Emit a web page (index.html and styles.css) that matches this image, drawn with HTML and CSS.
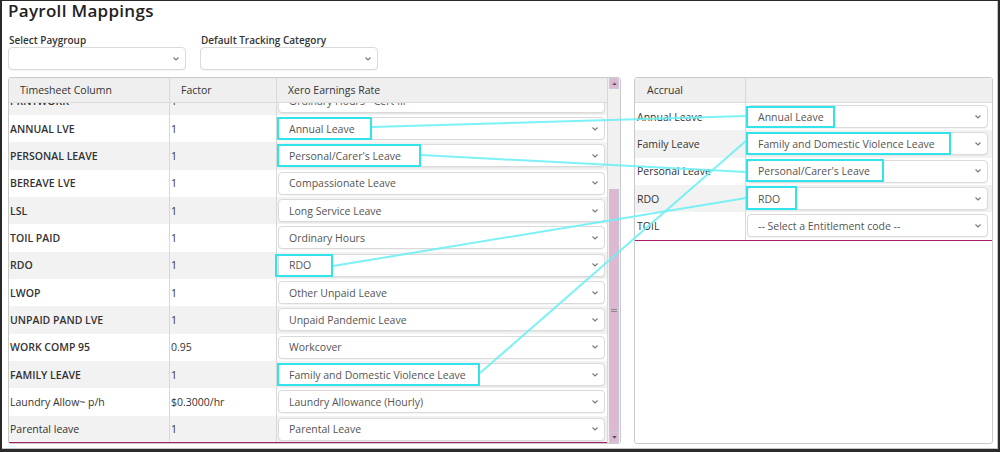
FILE: index.html
```html
<!DOCTYPE html>
<html lang="en">
<head>
<meta charset="utf-8">
<title>Payroll Mappings</title>
<link rel="stylesheet" href="styles.css">
</head>
<body>
<div class="page">
  <h1 class="title">Payroll Mappings</h1>

  <div class="filters">
    <div class="field">
      <label class="field-label">Select Paygroup</label>
      <div class="sel sel-top"><span class="sel-text"></span><svg class="chev" viewBox="0 0 6 4"><path d="M0.5 0.5 L3 3 L5.5 0.5"/></svg></div>
    </div>
    <div class="field">
      <label class="field-label">Default Tracking Category</label>
      <div class="sel sel-top"><span class="sel-text"></span><svg class="chev" viewBox="0 0 6 4"><path d="M0.5 0.5 L3 3 L5.5 0.5"/></svg></div>
    </div>
  </div>

  <div class="panels">
    <div class="panel panel-left">
      <div class="grid">
        <div class="thead">
          <div class="th c1">Timesheet Column</div>
          <div class="th c2">Factor</div>
          <div class="th c3">Xero Earnings Rate</div>
        </div>
        <div class="tbody">
          <div class="rows scrolled">
            <div class="row"><div class="td c1 up">PRNTWORK</div><div class="td c2">1</div><div class="td c3"><div class="sel"><span class="sel-text">Ordinary Hours - Cert III</span><svg class="chev" viewBox="0 0 6 4"><path d="M0.5 0.5 L3 3 L5.5 0.5"/></svg></div></div></div>
            <div class="row"><div class="td c1 up">ANNUAL LVE</div><div class="td c2">1</div><div class="td c3"><div class="sel"><span class="sel-text">Annual Leave</span><svg class="chev" viewBox="0 0 6 4"><path d="M0.5 0.5 L3 3 L5.5 0.5"/></svg></div></div></div>
            <div class="row"><div class="td c1 up">PERSONAL LEAVE</div><div class="td c2">1</div><div class="td c3"><div class="sel"><span class="sel-text">Personal/Carer's Leave</span><svg class="chev" viewBox="0 0 6 4"><path d="M0.5 0.5 L3 3 L5.5 0.5"/></svg></div></div></div>
            <div class="row"><div class="td c1 up">BEREAVE LVE</div><div class="td c2">1</div><div class="td c3"><div class="sel"><span class="sel-text">Compassionate Leave</span><svg class="chev" viewBox="0 0 6 4"><path d="M0.5 0.5 L3 3 L5.5 0.5"/></svg></div></div></div>
            <div class="row"><div class="td c1 up">LSL</div><div class="td c2">1</div><div class="td c3"><div class="sel"><span class="sel-text">Long Service Leave</span><svg class="chev" viewBox="0 0 6 4"><path d="M0.5 0.5 L3 3 L5.5 0.5"/></svg></div></div></div>
            <div class="row"><div class="td c1 up">TOIL PAID</div><div class="td c2">1</div><div class="td c3"><div class="sel"><span class="sel-text">Ordinary Hours</span><svg class="chev" viewBox="0 0 6 4"><path d="M0.5 0.5 L3 3 L5.5 0.5"/></svg></div></div></div>
            <div class="row"><div class="td c1 up">RDO</div><div class="td c2">1</div><div class="td c3"><div class="sel"><span class="sel-text">RDO</span><svg class="chev" viewBox="0 0 6 4"><path d="M0.5 0.5 L3 3 L5.5 0.5"/></svg></div></div></div>
            <div class="row"><div class="td c1 up">LWOP</div><div class="td c2">1</div><div class="td c3"><div class="sel"><span class="sel-text">Other Unpaid Leave</span><svg class="chev" viewBox="0 0 6 4"><path d="M0.5 0.5 L3 3 L5.5 0.5"/></svg></div></div></div>
            <div class="row"><div class="td c1 up">UNPAID PAND LVE</div><div class="td c2">1</div><div class="td c3"><div class="sel"><span class="sel-text">Unpaid Pandemic Leave</span><svg class="chev" viewBox="0 0 6 4"><path d="M0.5 0.5 L3 3 L5.5 0.5"/></svg></div></div></div>
            <div class="row"><div class="td c1 up">WORK COMP 95</div><div class="td c2">0.95</div><div class="td c3"><div class="sel"><span class="sel-text">Workcover</span><svg class="chev" viewBox="0 0 6 4"><path d="M0.5 0.5 L3 3 L5.5 0.5"/></svg></div></div></div>
            <div class="row"><div class="td c1 up">FAMILY LEAVE</div><div class="td c2">1</div><div class="td c3"><div class="sel"><span class="sel-text">Family and Domestic Violence Leave</span><svg class="chev" viewBox="0 0 6 4"><path d="M0.5 0.5 L3 3 L5.5 0.5"/></svg></div></div></div>
            <div class="row"><div class="td c1">Laundry Allow~ p/h</div><div class="td c2">$0.3000/hr</div><div class="td c3"><div class="sel"><span class="sel-text">Laundry Allowance (Hourly)</span><svg class="chev" viewBox="0 0 6 4"><path d="M0.5 0.5 L3 3 L5.5 0.5"/></svg></div></div></div>
            <div class="row"><div class="td c1">Parental leave</div><div class="td c2">1</div><div class="td c3"><div class="sel"><span class="sel-text">Parental Leave</span><svg class="chev" viewBox="0 0 6 4"><path d="M0.5 0.5 L3 3 L5.5 0.5"/></svg></div></div></div>
          </div>
        </div>
      </div>
      <div class="scrollbar">
        <div class="sb-btn"><svg viewBox="0 0 6 4"><path d="M0 4 L3 0.5 L6 4 Z"/></svg></div>
        <div class="sb-track">
          <div class="sb-gap"></div>
          <div class="sb-thumb"><span class="grip"></span></div>
        </div>
        <div class="sb-btn"><svg viewBox="0 0 6 4"><path d="M0 0 L3 3.5 L6 0 Z"/></svg></div>
      </div>
    </div>

    <div class="panel panel-right">
      <div class="thead">
        <div class="th r1">Accrual</div>
        <div class="th r2"></div>
      </div>
      <div class="rbody">
        <div class="row"><div class="td r1">Annual Leave</div><div class="td r2"><div class="sel"><span class="sel-text">Annual Leave</span><svg class="chev" viewBox="0 0 6 4"><path d="M0.5 0.5 L3 3 L5.5 0.5"/></svg></div></div></div>
        <div class="row"><div class="td r1">Family Leave</div><div class="td r2"><div class="sel"><span class="sel-text">Family and Domestic Violence Leave</span><svg class="chev" viewBox="0 0 6 4"><path d="M0.5 0.5 L3 3 L5.5 0.5"/></svg></div></div></div>
        <div class="row"><div class="td r1">Personal Leave</div><div class="td r2"><div class="sel"><span class="sel-text">Personal/Carer's Leave</span><svg class="chev" viewBox="0 0 6 4"><path d="M0.5 0.5 L3 3 L5.5 0.5"/></svg></div></div></div>
        <div class="row"><div class="td r1">RDO</div><div class="td r2"><div class="sel"><span class="sel-text">RDO</span><svg class="chev" viewBox="0 0 6 4"><path d="M0.5 0.5 L3 3 L5.5 0.5"/></svg></div></div></div>
        <div class="row"><div class="td r1">TOIL</div><div class="td r2"><div class="sel"><span class="sel-text">-- Select a Entitlement code --</span><svg class="chev" viewBox="0 0 6 4"><path d="M0.5 0.5 L3 3 L5.5 0.5"/></svg></div></div></div>
      </div>
    </div>
  </div>

  <svg class="annot" viewBox="0 0 1000 452" width="1000" height="452">
    <g class="links">
      <line x1="372" y1="127" x2="746" y2="116"/>
      <line x1="421" y1="155" x2="746" y2="172"/>
      <line x1="333" y1="266" x2="746" y2="198"/>
      <line x1="480" y1="373" x2="747" y2="140"/>
    </g>
    <g class="boxes">
      <rect x="278" y="118" width="93" height="21"/>
      <rect x="278" y="145" width="142" height="21"/>
      <rect x="276" y="255" width="56" height="21"/>
      <rect x="278" y="364" width="201" height="21"/>
      <rect x="747" y="107" width="87" height="20"/>
      <rect x="747" y="133" width="203" height="21"/>
      <rect x="747" y="160" width="136" height="21"/>
      <rect x="747" y="187" width="49" height="22"/>
    </g>
  </svg>
</div>
</body>
</html>
```

FILE: styles.css
```css
* { box-sizing: border-box; }

html, body {
  margin: 0;
  padding: 0;
  background: #fff;
}

body {
  font-family: "Open Sans", "Noto Sans", "Liberation Sans", sans-serif;
  color: #333;
}

.page {
  position: relative;
  width: 1000px;
  height: 452px;
  overflow: hidden;
  border-top: 1px solid #2a2a2a;
  border-left: 2px solid #2a2a2a;
  border-right: 2px solid #2a2a2a;
  border-bottom: 3px solid #2a2a2a;
  box-shadow: inset -1px -1px 0 #c4c4c4;
  background: #fff;
}

.title {
  margin: 0;
  padding-left: 6px;
  font-size: 17px;
  line-height: 20px;
  font-weight: 600;
  letter-spacing: 0.3px;
  color: #222;
}

.filters {
  display: flex;
  gap: 14px;
  margin-top: 13px;
  padding-left: 6px;
}

.field {
  display: flex;
  flex-direction: column;
  width: 178px;
}

.field-label {
  font-size: 10px;
  line-height: 13px;
  font-weight: 600;
  color: #333;
  padding-left: 1px;
}

/* select boxes */
.sel {
  position: relative;
  display: flex;
  align-items: center;
  height: 23px;
  background: #fff;
  border: 1px solid #dadada;
  border-radius: 4px;
  box-shadow: 0 1px 1px rgba(0, 0, 0, 0.05);
  padding-left: 10px;
  padding-right: 6px;
}

.sel-text {
  flex: 1;
  font-size: 10.5px;
  font-weight: 500;
  color: #555;
  white-space: nowrap;
  overflow: hidden;
}

.chev {
  width: 6px;
  height: 4px;
  fill: none;
  stroke: #777;
  stroke-width: 1.1;
}

/* panels */
.panels {
  display: flex;
  gap: 13px;
  margin-top: 7px;
  padding-left: 6px;
}

.panel {
  height: 367px;
  border: 1px solid #cacaca;
  border-radius: 3px;
  background: #fff;
}

.panel-left {
  width: 613px;
  display: flex;
}

.panel-right {
  width: 359px;
  display: flex;
  flex-direction: column;
}

.grid {
  width: 598px;
  display: flex;
  flex-direction: column;
}

.thead {
  display: flex;
  height: 25px;
  background: #efefef;
  border-bottom: 1px solid #dcdcdc;
}

.th {
  display: flex;
  align-items: center;
  padding-left: 11px;
  font-size: 10.5px;
  font-weight: 500;
  color: #333;
}

.c1 { width: 161px; border-right: 1px solid #d8d8d8; }
.c2 { width: 107px; border-right: 1px solid #d8d8d8; }
.c3 { width: 330px; }

.r1 { width: 111px; border-right: 1px solid #d8d8d8; }
.r2 { width: 246px; }

.th.r1 { padding-left: 12px; }

.tbody {
  height: 341px;
  overflow: hidden;
  border-bottom: 1px solid #a8206a;
}

.rows.scrolled {
  margin-top: -15.33px;
}

.row {
  display: flex;
  height: 27.33px;
}

.rows .row:nth-child(odd),
.rbody .row:nth-child(even) {
  background: #f2f2f2;
}

.td {
  display: flex;
  align-items: center;
  font-size: 10.5px;
  font-weight: 500;
  color: #333;
  white-space: nowrap;
}

.td.c1, .td.c2 { padding-left: 1px; }
.td.r1 { padding-left: 2px; }

.td.up { font-weight: 600; }

.td.c3 { padding-left: 1px; padding-right: 2px; }
.td.c3 .sel { width: 100%; }

.td.r2 { padding-left: 1px; padding-right: 4px; }
.td.r2 .sel { width: 100%; }

.rbody {
  border-bottom: 1px solid #a8206a;
}

/* scrollbar */
.scrollbar {
  width: 13px;
  display: flex;
  flex-direction: column;
  border-left: 1px solid #d8d8d8;
  background: #f1f1f1;
  padding: 0 1px;
}

.sb-btn {
  height: 11px;
  background: #dcb9d1;
  display: flex;
  align-items: center;
  justify-content: center;
  border: 1px solid #d1c6dc;
}

.sb-btn svg {
  width: 5px;
  height: 3px;
  fill: #555;
}

.sb-track {
  flex: 1;
  display: flex;
  flex-direction: column;
}

.sb-gap {
  height: 100px;
}

.sb-thumb {
  flex: 1;
  background: #dcb9d1;
  border: 1px solid #cbc1d9;
  display: flex;
  align-items: center;
  justify-content: center;
}

.grip {
  width: 6px;
  height: 3px;
  border-top: 1px solid #8a8a8a;
  border-bottom: 1px solid #8a8a8a;
}

/* annotations overlay */
.annot {
  position: absolute;
  left: -2px;
  top: -1px;
  pointer-events: none;
}

.links line {
  stroke: #6ff0f5;
  stroke-width: 2;
  opacity: 0.9;
}

.boxes rect {
  fill: none;
  stroke: #33e3ec;
  stroke-width: 2;
}
```
